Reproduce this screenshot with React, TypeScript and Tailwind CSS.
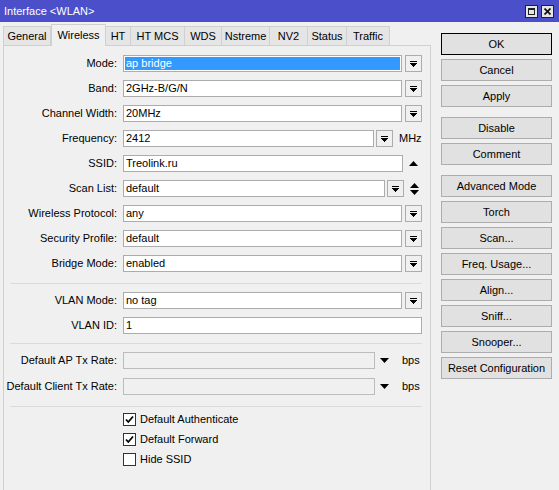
import React from 'react';

const DropIcon: React.FC = () => (
  <svg width="7" height="6" viewBox="0 0 7 6" shapeRendering="crispEdges">
    <rect x="0" y="0" width="7" height="1" fill="#000" />
    <path d="M0 2h7l-3.5 4z" fill="#000" />
  </svg>
);

const DropButton: React.FC = () => (
  <div className="w-[17px] h-[17px] border border-[#acacac] bg-[#f0f0f0] flex items-center justify-center">
    <DropIcon />
  </div>
);

const UpArrow: React.FC = () => (
  <svg width="9" height="5" viewBox="0 0 9 5">
    <path d="M0 5h9L4.5 0z" fill="#000" />
  </svg>
);

const DownArrow: React.FC = () => (
  <svg width="9" height="5" viewBox="0 0 9 5">
    <path d="M0 0h9L4.5 5z" fill="#000" />
  </svg>
);

const Row: React.FC<{ label: string; first?: boolean; children: React.ReactNode }> = ({ label, first, children }) => (
  <div className={`flex items-center h-[17px] ${first ? '' : 'mt-[8px]'}`}>
    <div className="w-[113px] text-right whitespace-nowrap">{label}</div>
    <div className="ml-[6px] flex items-center">{children}</div>
  </div>
);

const TextBox: React.FC<{ value: string; width: string; selected?: boolean }> = ({ value, width, selected }) => (
  <div className={`${width} h-[17px] border border-[#acacac] bg-white p-[1px] flex`}>
    <div className={`flex-1 flex items-center pl-[1px] ${selected ? 'bg-[#3399ff] text-white' : ''}`}>{value}</div>
  </div>
);

const Separator: React.FC<{ mt: string }> = ({ mt }) => (
  <div className={`${mt} ml-[6px] w-[412px] h-px bg-[#dadada]`} />
);

const Check: React.FC<{ label: string; checked: boolean; first?: boolean }> = ({ label, checked, first }) => (
  <div className={`flex items-center h-[13px] ml-[119px] ${first ? 'mt-[6px]' : 'mt-[7px]'}`}>
    <div className="w-[13px] h-[13px] border border-[#333] bg-white flex items-center justify-center">
      {checked && (
        <svg width="9" height="9" viewBox="0 0 9 9">
          <path d="M1 4.5l2.3 2.5L8 1.5" stroke="#000" strokeWidth="1.8" fill="none" />
        </svg>
      )}
    </div>
    <span className="ml-[4px]">{label}</span>
  </div>
);

const tabs = [
  { name: 'General', w: 'w-[48px]' },
  { name: 'Wireless', w: 'w-[55px]', active: true },
  { name: 'HT', w: 'w-[25px]' },
  { name: 'HT MCS', w: 'w-[54px]' },
  { name: 'WDS', w: 'w-[37px]' },
  { name: 'Nstreme', w: 'w-[48px]' },
  { name: 'NV2', w: 'w-[38px]' },
  { name: 'Status', w: 'w-[39px]' },
  { name: 'Traffic', w: 'w-[43px]' },
];

const buttonGroups = [
  ['OK', 'Cancel', 'Apply'],
  ['Disable', 'Comment'],
  ['Advanced Mode', 'Torch', 'Scan...', 'Freq. Usage...', 'Align...', 'Sniff...', 'Snooper...', 'Reset Configuration'],
];

export default function App() {
  return (
    <div className="w-[559px] h-[490px] overflow-hidden bg-[#f0f0f0] flex flex-col text-[11px] text-black font-['Liberation_Sans',Arial,sans-serif]">
      {/* title bar */}
      <div className="h-[22px] bg-[#4b4fc9] flex items-center justify-between pl-[4px] pr-[5px] shrink-0">
        <span className="text-white">Interface &lt;WLAN&gt;</span>
        <div className="flex gap-[3px]">
          <div className="w-[13px] h-[13px] border border-[#222] bg-[#e6e6e6] flex items-center justify-center">
            <div className="w-[7px] h-[7px] border border-[#222] border-t-2" />
          </div>
          <div className="w-[13px] h-[13px] border border-[#222] bg-[#e6e6e6] flex items-center justify-center">
            <svg width="7" height="7" viewBox="0 0 7 7">
              <path d="M0.5 0.5l6 6M6.5 0.5l-6 6" stroke="#111" strokeWidth="1.7" />
            </svg>
          </div>
        </div>
      </div>

      <div className="flex flex-1 min-h-0">
        {/* left: tabs + panel */}
        <div className="ml-[3px] w-[428px] flex flex-col">
          <div className="h-[23px] flex items-end shrink-0">
            {tabs.map((t) =>
              t.active ? (
                <div
                  key={t.name}
                  className={`${t.w} h-[22px] -mb-px relative z-10 bg-[#f0f0f0] border border-b-0 border-[#d0d0d0] flex items-center justify-center`}
                >
                  {t.name}
                </div>
              ) : (
                <div
                  key={t.name}
                  className={`${t.w} h-[19px] bg-[#e5e5e5] border border-b-0 border-l-0 first:border-l border-[#d0d0d0] flex items-center justify-center`}
                >
                  {t.name}
                </div>
              )
            )}
          </div>
          <div className="flex-1 border border-b-0 border-[#d0d0d0] pt-[9px] flex flex-col">
            <Row label="Mode:" first>
              <TextBox value="ap bridge" width="w-[279px]" selected />
              <div className="ml-[3px]"><DropButton /></div>
            </Row>
            <Row label="Band:">
              <TextBox value="2GHz-B/G/N" width="w-[279px]" />
              <div className="ml-[3px]"><DropButton /></div>
            </Row>
            <Row label="Channel Width:">
              <TextBox value="20MHz" width="w-[279px]" />
              <div className="ml-[3px]"><DropButton /></div>
            </Row>
            <Row label="Frequency:">
              <TextBox value="2412" width="w-[251px]" />
              <div className="ml-[2px]"><DropButton /></div>
              <span className="ml-[6px]">MHz</span>
            </Row>
            <Row label="SSID:">
              <TextBox value="Treolink.ru" width="w-[280px]" />
              <div className="ml-[6px]"><UpArrow /></div>
            </Row>
            <Row label="Scan List:">
              <TextBox value="default" width="w-[262px]" />
              <div className="ml-[2px]"><DropButton /></div>
              <div className="ml-[6px] flex flex-col gap-[2px]">
                <UpArrow />
                <DownArrow />
              </div>
            </Row>
            <Row label="Wireless Protocol:">
              <TextBox value="any" width="w-[279px]" />
              <div className="ml-[3px]"><DropButton /></div>
            </Row>
            <Row label="Security Profile:">
              <TextBox value="default" width="w-[279px]" />
              <div className="ml-[3px]"><DropButton /></div>
            </Row>
            <Row label="Bridge Mode:">
              <TextBox value="enabled" width="w-[279px]" />
              <div className="ml-[3px]"><DropButton /></div>
            </Row>

            <Separator mt="mt-[11px]" />

            <div className="mt-[8px]">
              <Row label="VLAN Mode:" first>
                <TextBox value="no tag" width="w-[279px]" />
                <div className="ml-[3px]"><DropButton /></div>
              </Row>
            </div>
            <Row label="VLAN ID:">
              <TextBox value="1" width="w-[299px]" />
            </Row>

            <Separator mt="mt-[9px]" />

            <div className="mt-[8px]">
              <Row label="Default AP Tx Rate:" first>
                <div className="w-[252px] h-[17px] border border-[#bcbcbc] bg-[#f0f0f0]" />
                <div className="ml-[5px]"><DownArrow /></div>
                <span className="ml-[13px]">bps</span>
              </Row>
            </div>
            <div className="mt-[9px]">
              <Row label="Default Client Tx Rate:" first>
                <div className="w-[252px] h-[17px] border border-[#bcbcbc] bg-[#f0f0f0]" />
                <div className="ml-[5px]"><DownArrow /></div>
                <span className="ml-[13px]">bps</span>
              </Row>
            </div>

            <Separator mt="mt-[11px]" />

            <Check label="Default Authenticate" checked first />
            <Check label="Default Forward" checked />
            <Check label="Hide SSID" checked={false} />
          </div>
        </div>

        {/* right: buttons */}
        <div className="ml-[10px] mt-[11px] w-[111px] flex flex-col">
          {buttonGroups.map((group, gi) => (
            <div key={gi} className={`flex flex-col gap-[4px] ${gi > 0 ? 'mt-[10px]' : ''}`}>
              {group.map((b) => (
                <div
                  key={b}
                  className={`h-[22px] bg-[#e1e1e1] border flex items-center justify-center ${
                    b === 'OK' ? 'border-black' : 'border-[#adadad]'
                  }`}
                >
                  {b}
                </div>
              ))}
            </div>
          ))}
        </div>
      </div>
    </div>
  );
}
